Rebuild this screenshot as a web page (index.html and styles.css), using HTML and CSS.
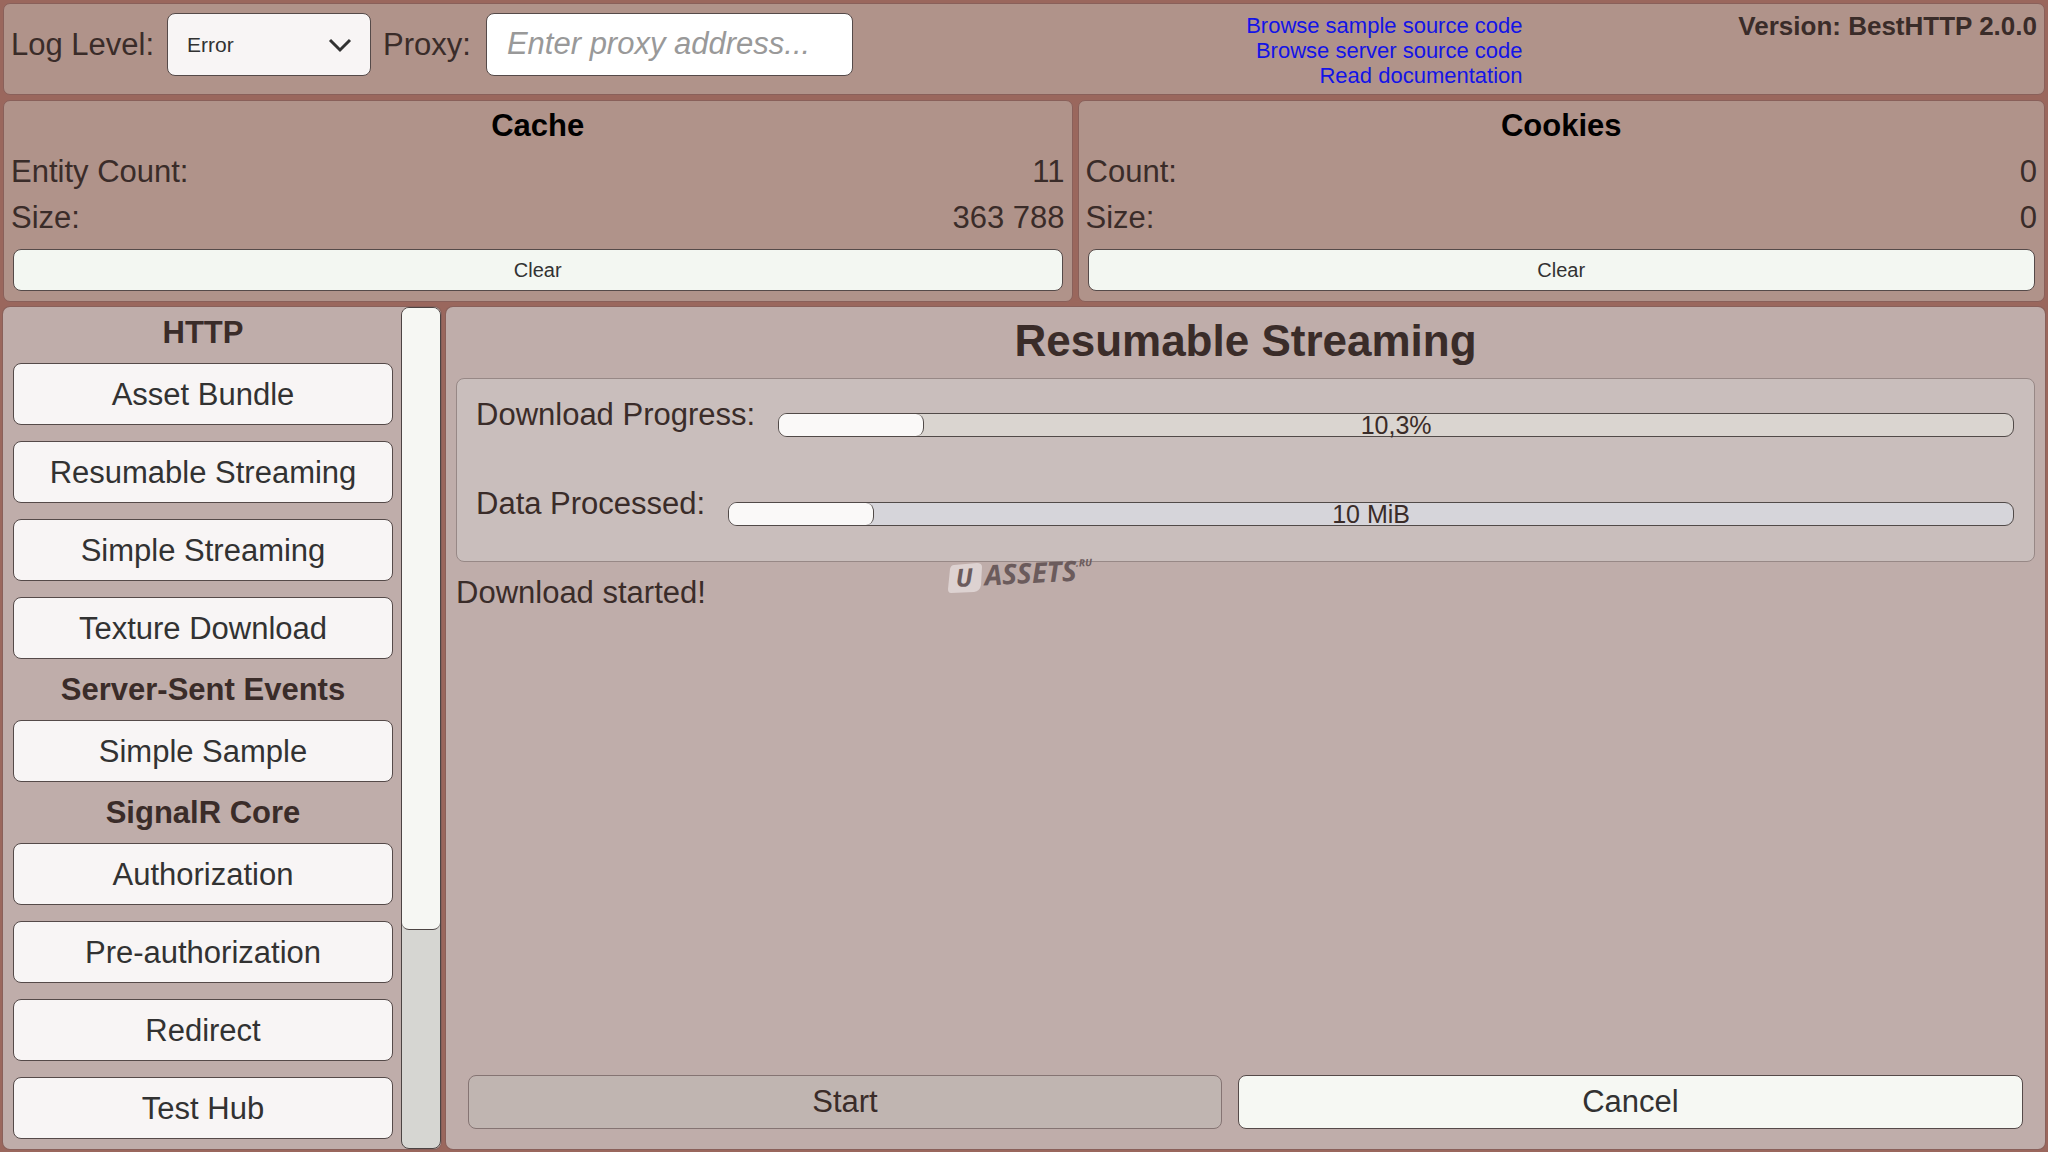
FILE: index.html
```html
<!DOCTYPE html>
<html lang="en">
<head>
<meta charset="UTF-8">
<meta name="viewport" content="width=device-width, initial-scale=1.0">
<title>BestHTTP Samples</title>
<link rel="stylesheet" href="styles.css">
</head>
<body>

<header class="panel topbar">
  <div class="settings">
    <label for="log-level">Log Level:</label>
    <div class="select-wrap">
      <select id="log-level">
        <option>Error</option>
        <option>Warning</option>
        <option>Information</option>
        <option>All</option>
      </select>
      <svg class="arrow" viewBox="0 0 24 16" aria-hidden="true"><path d="M2 3 L12 13 L22 3"/></svg>
    </div>
    <label for="proxy">Proxy:</label>
    <input type="text" id="proxy" placeholder="Enter proxy address...">
  </div>
  <nav class="links">
    <a href="#">Browse sample source code</a>
    <a href="#">Browse server source code</a>
    <a href="#">Read documentation</a>
  </nav>
  <div class="version">Version: BestHTTP 2.0.0</div>
</header>

<div class="stats">
  <section class="panel stat">
    <h2>Cache</h2>
    <div class="row"><span>Entity Count:</span><span>11</span></div>
    <div class="row"><span>Size:</span><span>363 788</span></div>
    <button class="clear">Clear</button>
  </section>
  <section class="panel stat">
    <h2>Cookies</h2>
    <div class="row"><span>Count:</span><span>0</span></div>
    <div class="row"><span>Size:</span><span>0</span></div>
    <button class="clear">Clear</button>
  </section>
</div>

<div class="workspace">
  <aside class="sidebar">
    <nav class="samples">
      <h3>HTTP</h3>
      <button>Asset Bundle</button>
      <button>Resumable Streaming</button>
      <button>Simple Streaming</button>
      <button>Texture Download</button>
      <h3>Server-Sent Events</h3>
      <button>Simple Sample</button>
      <h3>SignalR Core</h3>
      <button>Authorization</button>
      <button>Pre-authorization</button>
      <button>Redirect</button>
      <button>Test Hub</button>
    </nav>
    <div class="scrollbar"><div class="handle"></div></div>
  </aside>

  <main class="content">
    <h1>Resumable Streaming</h1>
    <div class="progress-box">
      <div class="progress-row">
        <span id="download-label">Download Progress:</span>
        <div class="bar warm" role="progressbar" aria-labelledby="download-label">
          <div class="fill" style="width: 11.7%"></div>
          <span class="value">10,3%</span>
        </div>
      </div>
      <div class="progress-row">
        <span id="data-label">Data Processed:</span>
        <div class="bar cool" role="progressbar" aria-labelledby="data-label">
          <div class="fill" style="width: 11.3%"></div>
          <span class="value">10 MiB</span>
        </div>
      </div>
    </div>
    <p class="status">Download started!</p>
    <div class="actions">
      <button disabled>Start</button>
      <button class="cancel">Cancel</button>
    </div>
    <svg class="watermark" viewBox="0 0 170 60" aria-hidden="true">
      <path class="badge" d="M7 16 L30 14 Q35 14 35 18 L34 36 Q33 42 27 43 L4 44 Q1 44 1 40 L3 20 Q4 16 7 16 Z"/>
      <g transform="rotate(-3 10 38)">
        <text class="mark letter" x="9" y="38">U</text>
        <text class="mark" x="38" y="38">ASSETS</text>
        <text class="mark tiny" x="130" y="24">.RU</text>
      </g>
    </svg>
  </main>
</div>

</body>
</html>
```
FILE: styles.css
```css
* {
  box-sizing: border-box;
}

body {
  margin: 0;
  padding: 3px;
  height: 100vh;
  display: flex;
  flex-direction: column;
  gap: 5px;
  background-color: #9a675d;
  font-family: "Liberation Sans", Arial, sans-serif;
  font-size: 31px;
  color: #3a2c29;
  overflow: hidden;
}

h1, h2, h3, p {
  margin: 0;
}

button, input, select {
  font-family: inherit;
  font-size: 31px;
  color: #323232;
  border: 1px solid #554a49;
  border-radius: 8px;
  background-color: #f8f5f5;
}

/* Panels */
.panel {
  background-color: #b0938a;
  border: 1px solid #89605a;
  border-radius: 7px;
}

/* Top bar */
.topbar {
  display: flex;
  gap: 8px;
  height: 92px;
  padding: 9px 7px;
}

.settings {
  display: flex;
  flex: 1;
  align-items: flex-start;
  line-height: 63px;
}

.settings label {
  white-space: nowrap;
}

.select-wrap {
  position: relative;
  width: 204px;
  height: 63px;
  margin: 0 12px 0 13px;
}

.select-wrap select {
  display: block;
  width: 100%;
  height: 100%;
  padding: 0 19px;
  font-size: 21px;
  appearance: none;
}

.arrow {
  position: absolute;
  right: 19px;
  top: 24px;
  width: 24px;
  height: 16px;
  fill: none;
  stroke: #323232;
  stroke-width: 3;
  pointer-events: none;
}

.settings input {
  width: 367px;
  height: 63px;
  margin-left: 15px;
  padding: 0 20px 2px;
  background-color: #fff;
}

.settings input::placeholder {
  color: #999;
  font-style: italic;
}

.links {
  display: flex;
  flex-direction: column;
  text-align: right;
  font-size: 22px;
  line-height: 25px;
}

.links a {
  color: #1414e6;
  text-decoration: none;
}

.version {
  width: 25%;
  font-size: 26px;
  font-weight: bold;
  line-height: 26px;
  text-align: right;
}

/* Cache and cookies */
.stats {
  display: grid;
  grid-template-columns: 1069fr 967fr;
  gap: 5px;
}

.stat {
  display: flex;
  flex-direction: column;
  height: 202px;
  padding: 2px 7px;
  line-height: 46px;
}

.stat h2 {
  font-size: 31px;
  text-align: center;
  color: #000;
}

.row {
  display: flex;
  justify-content: space-between;
}

.clear {
  height: 42px;
  margin: 8px 2px 0;
  font-size: 20px;
  background-color: #f3f7f2;
}

/* Sample list */
.workspace {
  display: flex;
  flex: 1;
  gap: 5px;
  min-height: 0;
}

.sidebar {
  display: flex;
  width: 438px;
  background-color: #bfadaa;
  border-radius: 7px;
  box-shadow: 0 0 0 1px #89605a;
}

.samples {
  display: flex;
  flex: 1;
  flex-direction: column;
  padding: 3px 8px 0 10px;
  overflow: hidden;
}

.samples h3 {
  font-size: 31px;
  line-height: 46px;
  margin-bottom: -1px;
  text-align: center;
}

.samples button {
  height: 62px;
  flex-shrink: 0;
  margin: 8px 0;
  padding: 2px 0 0;
}

.scrollbar {
  width: 40px;
  background-color: #d6d6d2;
  border: 1px solid #4c4443;
  border-radius: 8px;
}

.handle {
  height: 74%;
  background-color: #f6f7f3;
  border-bottom: 1px solid #4c4443;
  border-radius: 7px;
}

/* Selected sample */
.content {
  position: relative;
  display: flex;
  flex: 1;
  flex-direction: column;
  padding: 0 10px 20px;
  background-color: #bfadaa;
  border-radius: 7px;
  box-shadow: 0 0 0 1px #89605a;
}

.content h1 {
  font-size: 44px;
  line-height: 67px;
  text-align: center;
}

.progress-box {
  height: 184px;
  margin-top: 4px;
  padding: 13px 20px 13px 19px;
  background-color: #c9bebc;
  border: 1px solid #978886;
  border-radius: 8px;
}

.progress-row {
  display: flex;
  gap: 23px;
  height: 89px;
  line-height: 46px;
}

.bar {
  position: relative;
  flex: 1;
  height: 24px;
  margin-top: 21px;
  border: 1px solid #514a48;
  border-radius: 9px;
}

.warm {
  background-color: #dad5d0;
}

.cool {
  background-color: #d6d5da;
}

.fill {
  height: 100%;
  background-color: #faf9f8;
  border-right: 1px solid #514a48;
  border-radius: 8px;
}

.value {
  position: absolute;
  inset: 0;
  font-size: 25px;
  line-height: 23px;
  text-align: center;
}

.status {
  line-height: 62px;
}

.actions {
  display: flex;
  gap: 16px;
  margin-top: auto;
  padding: 0 12px;
}

.actions button {
  flex: 1 1 auto;
  height: 54px;
}

.actions .cancel {
  background-color: #f6f8f3;
}

.actions button:disabled {
  color: #3a2c29;
  background-color: #c0b5b1;
  border-color: #857473;
}

/* Watermark over the content */
.watermark {
  position: absolute;
  left: 501px;
  top: 242px;
  width: 170px;
  height: 60px;
}

.badge {
  fill: #ddd2d1;
}

.mark {
  fill: #6b5b5c;
  font-family: "Noto Sans", sans-serif;
  font-size: 28px;
  font-style: italic;
  font-weight: bold;
}

.letter {
  font-size: 25px;
}

.tiny {
  font-size: 10px;
}
```
